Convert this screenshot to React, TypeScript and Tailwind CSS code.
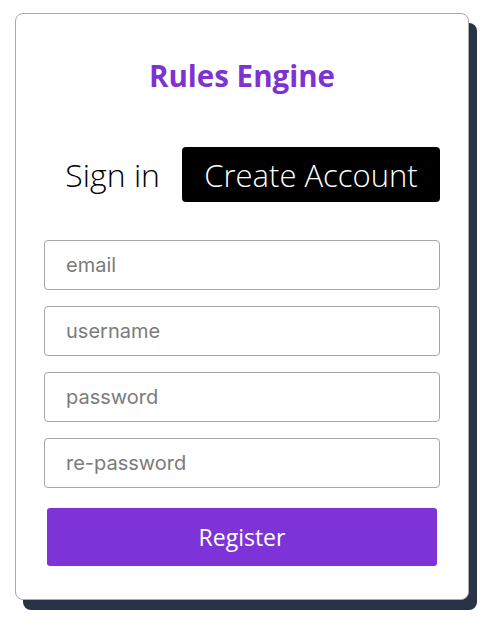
export default function App() {
  const fields = [
    { name: "email", type: "email" },
    { name: "username", type: "text" },
    { name: "password", type: "password" },
    { name: "re-password", type: "password" },
  ];

  return (
    <div className="min-h-screen bg-white pt-[13px] pl-[15px]">
      <div className="w-[454px] h-[587px] bg-white border border-[#a9a9a9] rounded-[8px] shadow-[8px_10px_0_#283446] px-[28px] flex flex-col">
        {/* Title */}
        <h1 className="mt-[42px] text-center text-[29.5px] leading-[40px] font-bold text-[#7d33d3] font-['Open_Sans','Noto_Sans',sans-serif]">
          Rules Engine
        </h1>

        {/* Tabs */}
        <div className="mt-[51px] flex items-center justify-end gap-[22px] font-['Open_Sans','Noto_Sans',sans-serif]">
          <button className="text-[32px] leading-[44px] text-black font-light">Sign in</button>
          <button className="w-[258px] h-[55px] bg-black text-white rounded-[4px] text-[31px] leading-[44px] font-light">
            Create Account
          </button>
        </div>

        {/* Form */}
        <form className="mt-[38px] flex flex-col gap-[16px]">
          {fields.map((f) => (
            <input
              key={f.name}
              type={f.type}
              placeholder={f.name}
              className="h-[50px] w-full border border-[#a6a6a6] rounded-[4px] pl-[21px] text-[20px] text-[#333] placeholder:text-[#7b7b7b] outline-none font-['Inter','Roboto',sans-serif]"
            />
          ))}
          <button
            type="button"
            className="mt-[4px] mx-[3px] h-[58px] bg-[#7e33d8] text-white rounded-[3px] text-[23px] font-['Open_Sans','Noto_Sans',sans-serif]"
          >
            Register
          </button>
        </form>
      </div>
    </div>
  );
}
